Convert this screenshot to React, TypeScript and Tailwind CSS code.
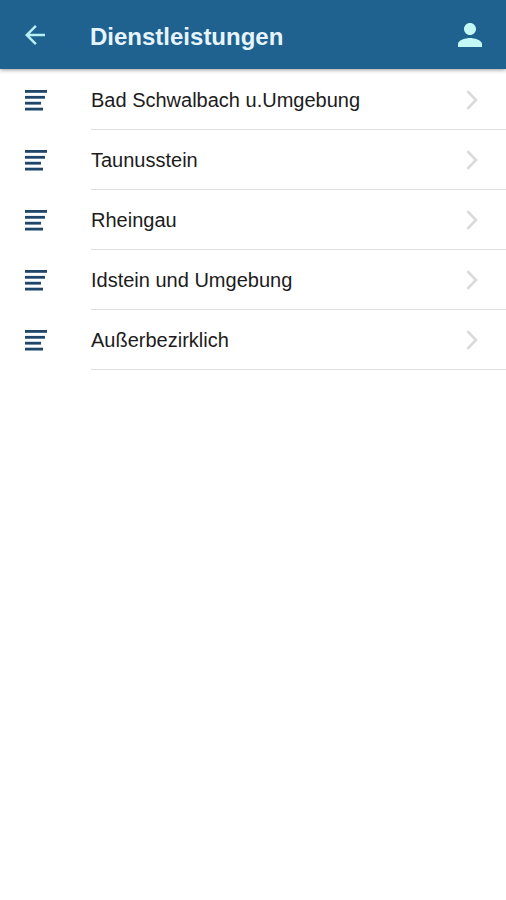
import { MdArrowBack, MdPerson } from 'react-icons/md';

interface Region {
  id: string;
  name: string;
}

const regions: Region[] = [
  { id: 'bad-schwalbach', name: 'Bad Schwalbach u.Umgebung' },
  { id: 'taunusstein', name: 'Taunusstein' },
  { id: 'rheingau', name: 'Rheingau' },
  { id: 'idstein', name: 'Idstein und Umgebung' },
  { id: 'ausserbezirklich', name: 'Außerbezirklich' },
];

function ListIcon() {
  return (
    <svg viewBox="0 0 22 21" className="h-[21px] w-[22px] shrink-0" fill="#1f456b" aria-hidden="true">
      <rect x="0" y="0" width="22" height="2.8" />
      <rect x="0" y="5.9" width="20" height="2.8" />
      <rect x="0" y="11.8" width="16" height="2.8" />
      <rect x="0" y="17.7" width="18" height="2.8" />
    </svg>
  );
}

function Chevron() {
  return (
    <svg
      viewBox="0 0 12 20"
      className="h-5 w-3 shrink-0"
      fill="none"
      stroke="#d9d9db"
      strokeWidth="2.6"
      aria-hidden="true"
    >
      <path d="M1.400 1.200 10 10l-8.600 8.800" />
    </svg>
  );
}

export default function App() {
  return (
    <div className="min-h-screen bg-white font-['Liberation_Sans',Arial,sans-serif] text-[#1c1c1c]">
      {/* Header */}
      <header className="flex h-[69px] items-center bg-[#1f618f] pt-px pr-[18px] pl-5 shadow-[0_1px_4px_rgba(0,0,0,0.4)]">
        <button type="button" aria-label="Zurück" className="shrink-0 text-[#b5f0f5]">
          <MdArrowBack className="size-[30px]" />
        </button>
        <h1 className="ml-10 min-w-0 flex-1 truncate pt-1 text-2xl font-bold text-[#e6f5fd]">
          Dienstleistungen
        </h1>
        <button type="button" aria-label="Profil" className="shrink-0 text-[#c4f8f6]">
          <MdPerson className="size-9" />
        </button>
      </header>

      {/* Regionen */}
      <ul className="pt-px">
        {regions.map((region) => (
          <li key={region.id}>
            <a href={`#${region.id}`} className="flex h-[60px] items-center pl-[25px]">
              <ListIcon />
              <span className="ml-11 flex h-full min-w-0 flex-1 items-center justify-between border-b border-[#dedede] pr-7">
                <span className="truncate text-xl">{region.name}</span>
                <Chevron />
              </span>
            </a>
          </li>
        ))}
      </ul>
    </div>
  );
}
